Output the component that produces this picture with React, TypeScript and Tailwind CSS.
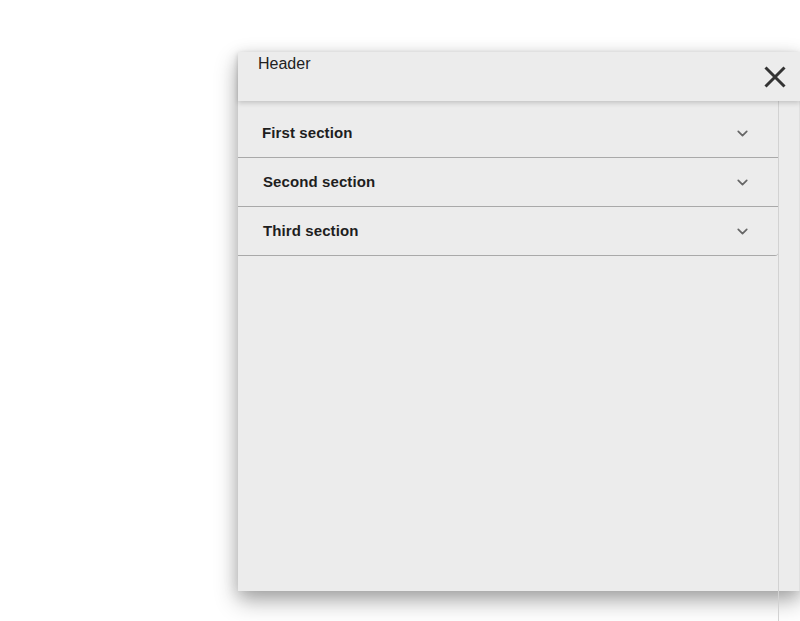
import { ChevronDown } from "lucide-react";

const sections = [
  { id: "first", title: "First section", pad: "pl-6" },
  { id: "second", title: "Second section", pad: "pl-[25px]" },
  { id: "third", title: "Third section", pad: "pl-[25px]" },
];

export default function App() {
  return (
    <div className="relative h-[621px] w-[800px] overflow-hidden bg-white font-['Liberation_Sans',Arial,sans-serif]">
      <div className="absolute left-[238px] top-[52px] flex h-[539px] w-[562px] flex-col bg-[#ececec] shadow-[0_10px_22px_rgba(0,0,0,0.3),0_4px_14px_rgba(0,0,0,0.14)]">
        <header className="relative z-10 flex h-[49px] flex-none items-start justify-between bg-[#ececec] pl-5 shadow-[0_2px_5px_rgba(0,0,0,0.18)]">
          <h1 className="text-base leading-6 text-[#222]">Header</h1>
          <button className="mr-[14px] mt-[14px] text-[#333]" aria-label="Close">
            <svg width="22" height="22" viewBox="0 0 22 22" fill="none" stroke="currentColor" strokeWidth="3">
              <path d="M1.5 1.5 L20.5 20.5 M20.5 1.5 L1.5 20.5" />
            </svg>
          </button>
        </header>

        <div className="flex min-h-0 flex-1 overflow-visible">
          <div className="h-[520px] w-[541px] flex-none border-r border-[#d2d2d2] pt-[8px]">
            {sections.map((s) => (
              <div
                key={s.id}
                className={`flex h-[49px] items-center justify-between border-b border-[#a9a9a9] pr-[27px] ${s.pad} last:rounded-br-[3px]`}
              >
                <span className="text-[15px] font-bold tracking-[0.1px] text-[#1e1e1e]">{s.title}</span>
                <ChevronDown className="h-[17px] w-[17px] text-[#666]" strokeWidth={2.4} />
              </div>
            ))}
          </div>
          <div className="flex-1 border-r border-[#e0e0e0]" />
        </div>
      </div>
    </div>
  );
}
